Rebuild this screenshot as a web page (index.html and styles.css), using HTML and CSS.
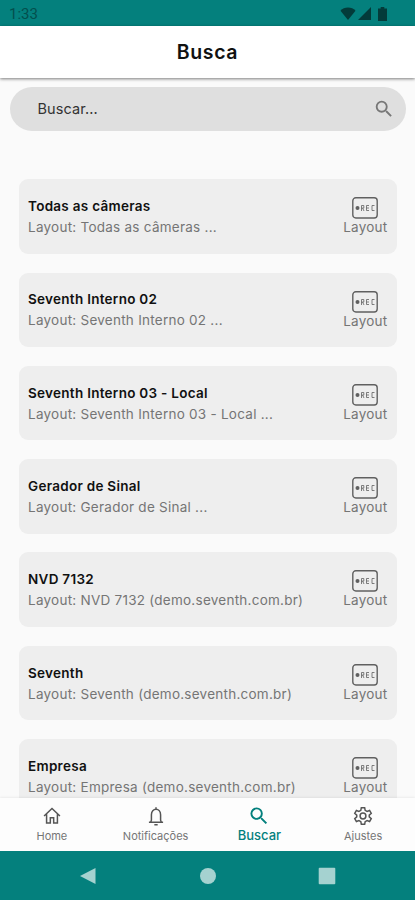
FILE: index.html
```
<!DOCTYPE html>
<html lang="pt-BR">
<head>
  <meta charset="UTF-8" />
  <meta name="viewport" content="width=device-width, initial-scale=1.0" />
  <title>Busca</title>
  <link rel="stylesheet" href="styles.css">
</head>
<body>
  <svg class="sprite">
    <symbol id="icon-search" viewBox="0 0 24 24">
      <path d="M15.5 14h-.79l-.28-.27A6.47 6.47 0 0 0 16 9.5 6.5 6.5 0 1 0 9.5 16c1.61 0 3.09-.59 4.23-1.57l.27.28v.79l5 4.99L20.49 19l-4.99-5zm-6 0C7.01 14 5 11.99 5 9.5S7.01 5 9.5 5 14 7.01 14 9.5 11.99 14 9.5 14z" />
    </symbol>
    <symbol id="icon-rec" viewBox="0 0 26 22">
      <rect x="0.8" y="0.8" width="24.4" height="20.2" rx="3" fill="none" stroke="currentColor" stroke-width="1.4" />
      <circle cx="5.5" cy="11" r="2" fill="currentColor" />
      <path d="M9.5 14V8.5h2.3v2.6H9.5M10.6 11.1l1.4 2.9M17 8.5h-2.5v5H17M14.5 11H17M22.5 8.5H20v5h2.5" fill="none" stroke="currentColor" stroke-width="0.8" />
    </symbol>
  </svg>

  <div class="status-bar">
    <span class="clock">1:33</span>
    <div class="status-icons">
      <svg width="16" height="13" viewBox="0 0 16 13"><path d="M8 13L0.5 3.8C2.4 1.7 5 .6 8 .6s5.6 1.1 7.5 3.2z" /></svg>
      <svg width="13" height="13" viewBox="0 0 13 13"><path d="M0 13L13 0v13z" /></svg>
      <svg class="battery" width="9" height="14" viewBox="0 0 9 14"><path d="M2.7 0h3.6v1.5H9V14H0V1.5h2.7z" /></svg>
    </div>
  </div>

  <header>
    <h1>Busca</h1>
  </header>

  <main>
    <div class="search">
      <span>Buscar...</span>
      <svg><use href="#icon-search" /></svg>
    </div>

    <div class="list">
      <div class="card">
        <div class="info">
          <h2>Todas as câmeras</h2>
          <p>Layout: Todas as câmeras ...</p>
        </div>
        <div class="kind"><svg><use href="#icon-rec" /></svg><span>Layout</span></div>
      </div>
      <div class="card">
        <div class="info">
          <h2>Seventh Interno 02</h2>
          <p>Layout: Seventh Interno 02 ...</p>
        </div>
        <div class="kind"><svg><use href="#icon-rec" /></svg><span>Layout</span></div>
      </div>
      <div class="card">
        <div class="info">
          <h2>Seventh Interno 03 - Local</h2>
          <p>Layout: Seventh Interno 03 - Local ...</p>
        </div>
        <div class="kind"><svg><use href="#icon-rec" /></svg><span>Layout</span></div>
      </div>
      <div class="card">
        <div class="info">
          <h2>Gerador de Sinal</h2>
          <p>Layout: Gerador de Sinal ...</p>
        </div>
        <div class="kind"><svg><use href="#icon-rec" /></svg><span>Layout</span></div>
      </div>
      <div class="card">
        <div class="info">
          <h2>NVD 7132</h2>
          <p>Layout: NVD 7132 (demo.seventh.com.br)</p>
        </div>
        <div class="kind"><svg><use href="#icon-rec" /></svg><span>Layout</span></div>
      </div>
      <div class="card">
        <div class="info">
          <h2>Seventh</h2>
          <p>Layout: Seventh (demo.seventh.com.br)</p>
        </div>
        <div class="kind"><svg><use href="#icon-rec" /></svg><span>Layout</span></div>
      </div>
      <div class="card">
        <div class="info">
          <h2>Empresa</h2>
          <p>Layout: Empresa (demo.seventh.com.br)</p>
        </div>
        <div class="kind"><svg><use href="#icon-rec" /></svg><span>Layout</span></div>
      </div>
    </div>
  </main>

  <nav class="tabs">
    <a class="tab">
      <svg class="line" viewBox="0 0 24 24"><path d="M2.5 12L12 3l9.5 9M5.5 10v10.500H10V14h4v6.500h4.500V10" /></svg>
      <span>Home</span>
    </a>
    <a class="tab">
      <svg class="line" viewBox="0 0 24 24"><path d="M12 1.500V4M3.500 19.500h17M5.500 19.500L6.500 17v-6.500C6.500 6.500 9 4 12 4s5.500 2.500 5.500 6.500V17l1 2.500M10 22.500h4" /></svg>
      <span>Notificações</span>
    </a>
    <a class="tab active">
      <svg viewBox="1.500 1.500 21 21"><use href="#icon-search" width="24" height="24" /></svg>
      <span>Buscar</span>
    </a>
    <a class="tab">
      <svg class="line gear" viewBox="0 0 24 24"><path d="M10 2h4l.6 3.200 2.300 1.300 3-1.100 2 3.500-2.400 2.100v2l2.400 2.100-2 3.500-3-1.100-2.300 1.300L14 22h-4l-.6-3.200-2.300-1.300-3 1.100-2-3.500L4.500 13v-2L2.100 8.900l2-3.500 3 1.100 2.300-1.300z" /><circle cx="12" cy="12" r="3.500" /></svg>
      <span>Ajustes</span>
    </a>
  </nav>

  <div class="system-nav">
    <svg viewBox="0 0 18 18"><path d="M16.500 1v16L1 9z" /></svg>
    <svg viewBox="0 0 18 18"><circle cx="9" cy="9" r="8" /></svg>
    <svg viewBox="0 0 18 18"><rect x="0.700" y="0.700" width="16.600" height="16.600" rx="1" /></svg>
  </div>
</body>
</html>
```
FILE: styles.css
```
:root {
  --teal: #04807d;
  --page-bg: #fafafa;
  --card-bg: #eeeeee;
  --muted: #757575;
}

* { box-sizing: border-box; }

body {
  margin: 0;
  height: 900px;
  background: var(--page-bg);
  color: #111;
  font-family: 'Inter', sans-serif;
  display: flex;
  flex-direction: column;
  overflow: hidden;
}

h1, h2, p { margin: 0; }

svg { display: block; }

.sprite { display: none; }

.status-bar {
  flex: 0 0 25.5px;
  background: var(--teal);
  color: #034f4d;
  padding: 2px 28px 0 9px;
  display: flex;
  justify-content: space-between;
  align-items: center;
}

.clock {
  font-family: Roboto, sans-serif;
  font-size: 15px;
  padding-top: 1px;
}

.status-icons {
  display: flex;
  align-items: center;
  gap: 2px;
  fill: #033b3a;
}

.battery { margin-left: 5px; }

header {
  flex: 0 0 52.5px;
  background: #fff;
  display: flex;
  align-items: center;
  justify-content: center;
  box-shadow: 0 1px 3px rgba(0, 0, 0, 0.5);
}

h1 {
  font-size: 19.5px;
  font-weight: 600;
  letter-spacing: 0.6px;
}

main {
  flex: 1;
  min-height: 0;
  overflow: hidden;
  padding: 9px 9px 0 10px;
}

.search {
  height: 44px;
  border-radius: 22px;
  background: #dfdfdf;
  padding: 0 11px 0 27.5px;
  display: flex;
  justify-content: space-between;
  align-items: center;
  font-size: 14.5px;
  letter-spacing: 0.1px;
  color: #333;
}

.search span { padding-bottom: 2px; }

.search svg {
  width: 22px;
  height: 22px;
  fill: #777;
}

.list {
  display: flex;
  flex-direction: column;
  gap: 18.8px;
  padding: 48.3px 9px 0 8.5px;
}

.card {
  flex: 0 0 74.5px;
  background: var(--card-bg);
  border-radius: 9px;
  padding: 0 9.5px 0 9.5px;
  display: flex;
  justify-content: space-between;
}

.info { padding-top: 16.8px; }

h2 {
  font-size: 13.5px;
  line-height: 21px;
  font-weight: 600;
  letter-spacing: 0.28px;
}

.info p,
.kind span {
  font-size: 13.5px;
  line-height: 21px;
  letter-spacing: 0.25px;
  color: var(--muted);
}

.kind {
  display: flex;
  flex-direction: column;
  align-items: center;
  padding-top: 18px;
  color: #606060;
}

.kind svg {
  width: 26px;
  height: 22px;
  margin-bottom: -2px;
}

.tabs {
  flex: 0 0 53px;
  background: #fdfdfd;
  display: flex;
  box-shadow: 0 -1px 2px rgba(0, 0, 0, 0.06);
}

.tab {
  flex: 1;
  display: flex;
  flex-direction: column;
  align-items: center;
  padding-top: 8px;
  color: #757575;
  font-size: 11px;
  line-height: 15px;
}

.tab svg {
  width: 20px;
  height: 20px;
  margin-bottom: 3px;
  fill: currentColor;
}

.tab .line {
  fill: none;
  stroke: #555;
  stroke-width: 1.8;
}

.active {
  color: var(--teal);
  font-size: 13px;
  font-weight: 500;
}

.active svg { margin-bottom: 2px; }

.system-nav {
  flex: 0 0 49px;
  background: var(--teal);
  display: flex;
  align-items: center;
  justify-content: center;
  gap: 101.5px;
  fill: #a5d2d0;
}

.system-nav svg {
  width: 18px;
  height: 18px;
}
```
